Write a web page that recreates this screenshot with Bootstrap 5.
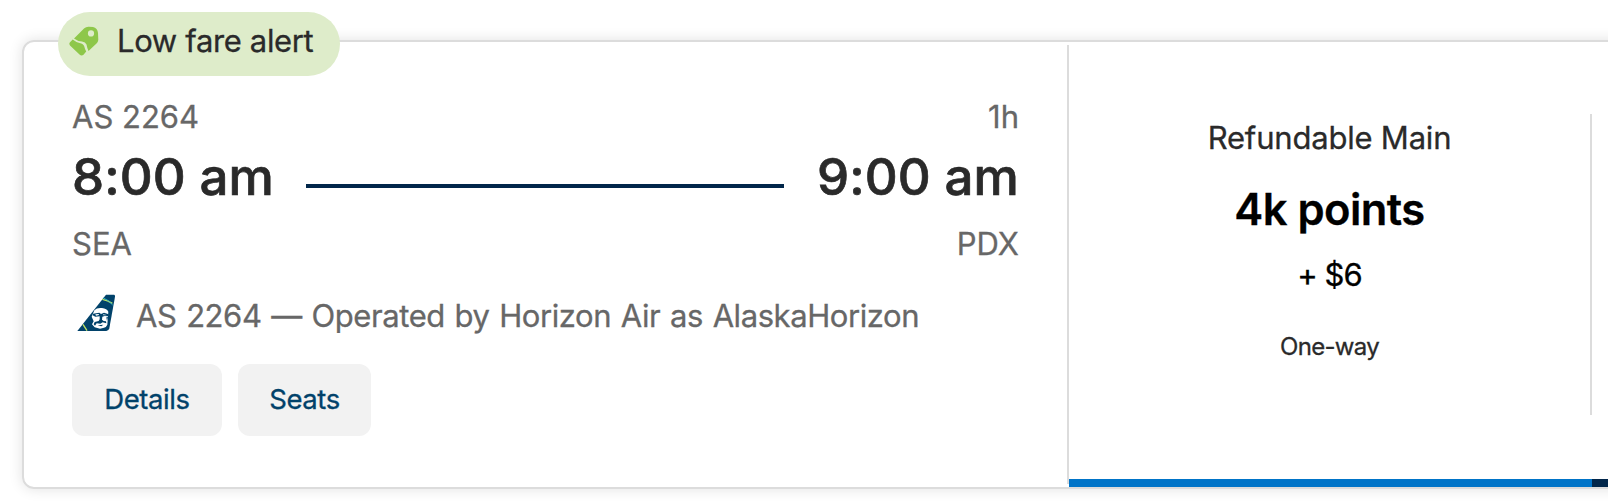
<!DOCTYPE html>
<html lang="en">
<head>
    <meta charset="UTF-8">
    <meta name="viewport" content="width=device-width, initial-scale=1.0">
    <title>Flight Results</title>
    <link href="https://cdn.jsdelivr.net/npm/bootstrap@5.3.0/dist/css/bootstrap.min.css" rel="stylesheet">
    <style>
        body {
            font-family: Inter, "Liberation Sans", sans-serif;
            font-size: 31px;
            line-height: 40px;
            color: #2a2a2a;
            background: #fff;
            -webkit-text-stroke: 0.3px;
        }
        .results {
            padding: 40px 0 15px 22px;
        }
        .flight {
            height: 449px;
            margin-right: -20px;
            border: 2px solid #dcdcdc;
            border-radius: 12px;
            box-shadow: 0 0 14px rgba(0, 0, 0, 0.12);
        }
        .fare-alert {
            top: -30px;
            left: 34px;
            width: 282px;
            height: 64px;
            padding: 0 0 6px 11px;
            background: #deecca;
            gap: 18px;
            letter-spacing: -0.35px;
        }
        .fare-alert svg {
            margin-top: -1px;
        }
        .trip {
            width: 1043px;
            padding: 55px 48px 0;
        }
        .muted-text {
            color: #676767;
        }
        .times {
            margin-top: 10px;
            font-size: 51px;
            line-height: 60px;
            font-weight: 500;
            letter-spacing: 0.1px;
            -webkit-text-stroke: 0.7px;
        }
        .route-line {
            height: 4px;
            margin: 18px 33px 0 32px;
            background: #01264a;
        }
        .airports {
            margin-top: 17px;
        }
        .operator {
            margin-top: 32px;
            gap: 21px;
            padding-left: 5px;
            letter-spacing: -0.42px;
            word-spacing: 1.4px;
        }
        .operator svg {
            margin-top: -6px;
        }
        .actions {
            margin-top: 28px;
            gap: 16px;
        }
        .btn-soft {
            --bs-btn-bg: #f2f2f2;
            --bs-btn-color: #01426a;
            --bs-btn-hover-bg: #e4e4e4;
            --bs-btn-border-width: 0;
            --bs-btn-border-radius: 12px;
            --bs-btn-padding-x: 0;
            --bs-btn-padding-y: 0;
            --bs-btn-font-size: 27.5px;
            height: 72px;
            letter-spacing: -0.4px;
        }
        .btn-details {
            width: 150px;
        }
        .btn-seats {
            width: 133px;
        }
        .split {
            width: 2px;
            margin: 3px 0;
            background: #dcdcdc;
        }
        .fare {
            width: 523px;
            border-bottom: 8px solid #0074c8;
            padding-top: 72px;
        }
        .fare-next {
            border-bottom: 8px solid #01264a;
        }
        .fare-body {
            height: 301px;
            padding-top: 4px;
            border-right: 2px solid #dcdcdc;
            letter-spacing: -0.2px;
        }
        .points {
            margin-top: 25px;
            font-size: 43.5px;
            line-height: 52px;
            font-weight: 600;
            letter-spacing: -0.55px;
            color: #000;
        }
        .cash {
            margin-top: 20px;
            letter-spacing: -1px;
            color: #000;
        }
        .way {
            margin-top: 36px;
            font-size: 24px;
            line-height: 32px;
            letter-spacing: -0.7px;
        }
    </style>
</head>
<body>
    <div class="results overflow-hidden">
        <div class="flight d-flex position-relative">
            <div class="fare-alert position-absolute rounded-pill d-flex align-items-center">
                <svg width="30" height="30" viewBox="0 0 30 30" fill="#8ec74a">
                    <path fill-rule="evenodd" d="M5 12.5 15 2.5Q17 .5 20 .7L24 1Q28.500 2 29 7L29.300 14Q29 16 27.500 17.500L19.500 25Q18 21.500 17.500 18.500Q16.500 16 13 15.500Q8 15 5 12.500ZM22 4.300a3 3 0 1 0 0 6.200a3 3 0 1 0 0-6.200Z"/>
                    <path d="M3.700 13.600Q6.500 16 10.500 17Q14.500 17.800 15.300 20.500Q16 23.500 17.200 25.500L14.500 28.700Q12.500 30.200 10.500 28.500L1 19.500Q-.300 17.700 1 16.300Z"/>
                </svg>
                <span>Low fare alert</span>
            </div>
            <div class="trip flex-shrink-0">
                <div class="muted-text d-flex justify-content-between">
                    <span>AS 2264</span>
                    <span>1h</span>
                </div>
                <div class="times d-flex align-items-center">
                    <span>8:00 am</span>
                    <div class="route-line flex-grow-1"></div>
                    <span>9:00 am</span>
                </div>
                <div class="airports muted-text d-flex justify-content-between">
                    <span>SEA</span>
                    <span>PDX</span>
                </div>
                <div class="operator muted-text d-flex align-items-center">
                    <svg width="38" height="38" viewBox="51 42 114 114">
                        <path fill="#01426a" d="M138 44H162Q166 44 165 50L148 145Q146 153 139 153H52Z"/>
                        <path fill="none" stroke="#c1e463" stroke-width="4" d="M127 58Q143 61 157 70M69 133L81 152"/>
                        <path fill="none" stroke="#2bb2c4" stroke-width="3" d="M130 54Q145 59 158 75"/>
                        <path fill="#fff" d="M103 91Q111 82 126 84Q141 86 145 95L142 134Q139 142 132 143L120 146L104 142L96 133L101 124L95 110Z"/>
                        <path fill="#01426a" d="M99 101L118 98L123 102L132 98L146 103L144 109L134 108L127 110L126 119L131 123L138 124L139 130L128 127L121 131L110 130L105 137L101 133L104 126L116 123L119 118L119 109L106 110L98 106ZM113 136L130 134L124 139ZM139 112L144 111L141 122Z"/>
                        <path fill="#fff" d="M106 103L116 102L117 105L108 107ZM129 103L140 105L139 106L130 106Z"/>
                    </svg>
                    <span>AS 2264 — Operated by Horizon Air as AlaskaHorizon</span>
                </div>
                <div class="actions d-flex">
                    <button type="button" class="btn btn-soft btn-details">Details</button>
                    <button type="button" class="btn btn-soft btn-seats">Seats</button>
                </div>
            </div>
            <div class="split flex-shrink-0"></div>
            <div class="fare flex-shrink-0 text-center">
                <div class="fare-body">
                    <div>Refundable Main</div>
                    <div class="points">4k points</div>
                    <div class="cash">+ $6</div>
                    <div class="way">One-way</div>
                </div>
            </div>
            <div class="fare-next flex-grow-1"></div>
        </div>
    </div>
    <script src="https://cdn.jsdelivr.net/npm/bootstrap@5.3.0/dist/js/bootstrap.bundle.min.js"></script>
</body>
</html>
